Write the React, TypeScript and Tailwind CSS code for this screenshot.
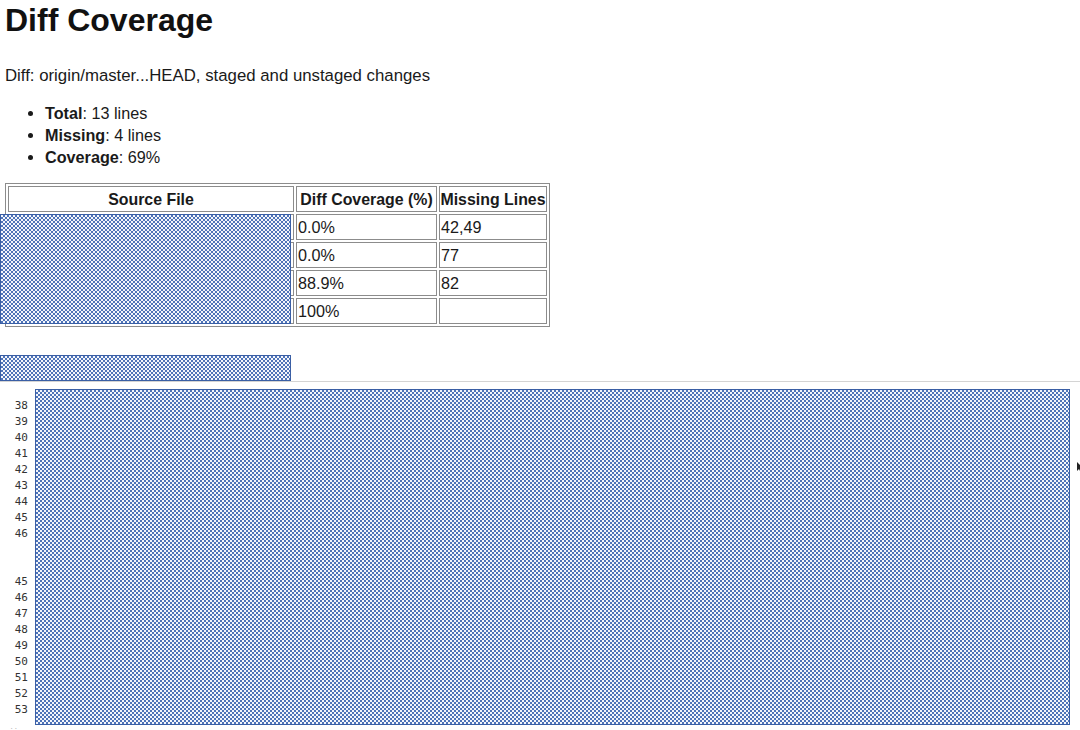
import React from 'react';

const checker =
  'border border-[#3a5fa5] bg-[repeating-conic-gradient(#4f74b8_0_25%,#f4f6fb_0_50%)] bg-[length:4px_4px]';

const rows = [
  { coverage: '0.0%', missing: '42,49' },
  { coverage: '0.0%', missing: '77' },
  { coverage: '88.9%', missing: '82' },
  { coverage: '100%', missing: '' },
];

const lineNumbers = ['38', '39', '40', '41', '42', '43', '44', '45', '46', '', '', '45', '46', '47', '48', '49', '50', '51', '52', '53'];

const cell = 'border border-[#8c8c8c] h-[26px] leading-[20px]';

export default function App() {
  return (
    <div className="relative h-[730px] w-[1080px] overflow-hidden bg-white font-['Liberation_Sans',Arial,sans-serif] text-[16.2px] text-[#1a1a1a]">
      <h1 className="pl-[5px] pt-[2px] text-[32px] font-bold leading-[36px] text-[#111]">Diff Coverage</h1>

      <p className="mt-[28px] pl-[5px] text-[16.8px] leading-[20px]">Diff: origin/master...HEAD, staged and unstaged changes</p>

      <ul className="mt-[16px] list-disc pl-[45px] leading-[22px]">
        <li><b>Total</b>: 13 lines</li>
        <li><b>Missing</b>: 4 lines</li>
        <li><b>Coverage</b>: 69%</li>
      </ul>

      <div className="relative mt-[15px] h-[144px]">
        <table className="ml-[5px] table-fixed border-separate border-spacing-[2px] border border-[#8c8c8c]">
          <thead>
            <tr>
              <th className={`${cell} w-[286px] px-0 pt-[2px] pb-0 text-[15.9px] font-bold`}>Source File</th>
              <th className={`${cell} w-[141px] whitespace-nowrap px-0 pt-[2px] pb-0 text-[15.9px] font-bold`}>Diff Coverage (%)</th>
              <th className={`${cell} w-[108px] whitespace-nowrap px-0 pt-[2px] pb-0 text-[15.9px] font-bold`}>Missing Lines</th>
            </tr>
          </thead>
          <tbody>
            {rows.map((row, i) => (
              <tr key={i}>
                <td className={cell}></td>
                <td className={`${cell} px-[1px] py-0`}>{row.coverage}</td>
                <td className={`${cell} px-[1px] py-0`}>{row.missing}</td>
              </tr>
            ))}
          </tbody>
        </table>
        {/* redacted file names, lying over the first column */}
        <div className={`absolute left-0 top-[31px] h-[110px] w-[291px] ${checker}`}></div>
      </div>

      <div className={`mt-[28px] h-[26px] w-[291px] ${checker}`}></div>

      <div className="flex h-[349px] border-t border-[#d4d4d4] pt-[7px]">
        <div className="w-[35px] pt-[9px] pr-[7px] text-right font-['DejaVu_Sans_Mono','Liberation_Mono',monospace] text-[11px] leading-[16px] text-[#333]">
          {lineNumbers.map((n, i) => (
            <div key={i} className="h-[16px]">{n}</div>
          ))}
          <div className="mt-[7px] h-[5px] pr-[10px] text-[7px] leading-[5px] text-[#bbb]">..</div>
        </div>
        <div className={`h-[336px] w-[1035px] ${checker}`}></div>
      </div>

      {/* mouse cursor, cut off by the window edge */}
      <svg className="absolute left-[1076px] top-[462px]" width="8" height="12" viewBox="0 0 8 12">
        <path d="M1 0v9l2-2 1.5 3 1.5-.8L4.6 6.4H7.4z" fill="#222" />
      </svg>
    </div>
  );
}
